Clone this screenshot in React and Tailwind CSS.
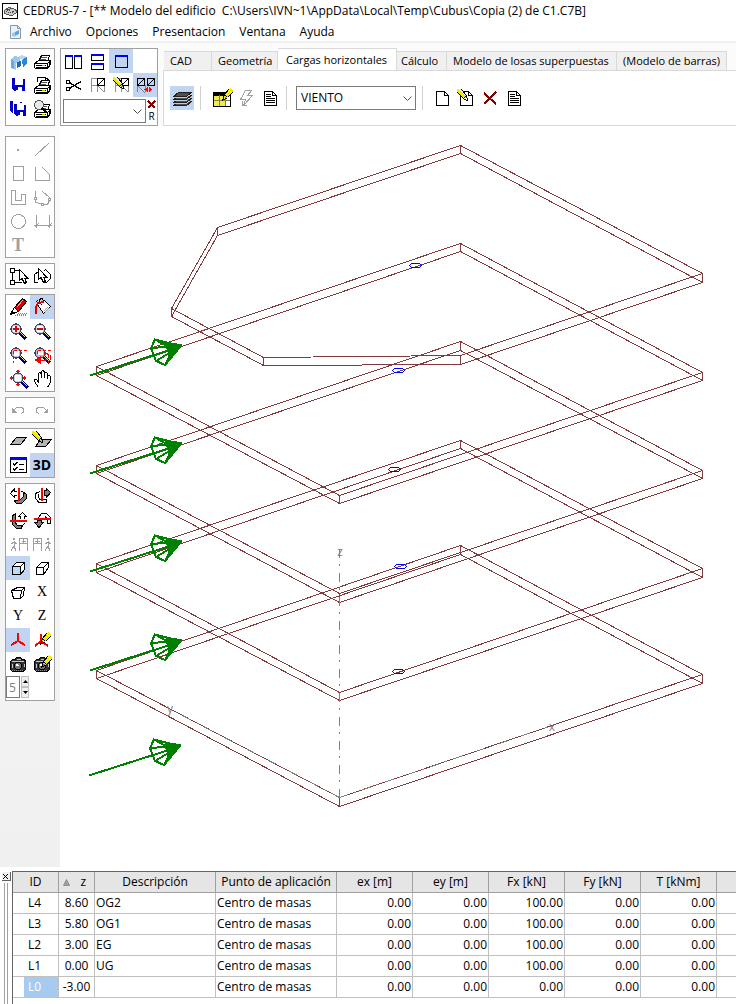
import { useState } from "react";

const BLUE = "#0000c8";
const GRAY = "#a0a0a0";

function Ico({ children, className = "size-6" }) {
  return (
    <svg viewBox="0 0 24 24" className={className} fill="none" stroke="#000" strokeWidth="1" shapeRendering="crispEdges" aria-hidden="true">
      {children}
    </svg>
  );
}

/* ---------- shared pieces of the icons ---------- */

function Pencil({ x = 0, y = 0 }) {
  return (
    <g transform={`translate(${x} ${y})`}>
      <path d="M0 0L4 0L9 6L9 9L6 8L0 3Z" fill="#f5e800" stroke="none" />
      <path d="M0.5 3.5L6.5 9.5M4.5 0.5L9.5 6.5L10.5 11.5L6 9.5M6.5 9.5L9.5 6.5" />
      <path d="M2 0L8 6" stroke="#fff" />
    </g>
  );
}

function PencilRight({ x = 0, y = 0 }) {
  return (
    <g transform={`translate(${x} ${y})`}>
      <path d="M9 0L12 3L6 10L3 9L3 7Z" fill="#f5e800" stroke="none" />
      <path d="M7.5 1.5L3.5 6.5L1.5 12.5L6.5 9.5L11.5 4.5M3.5 6.5L6.5 9.5" />
      <path d="M8 2L11 5" stroke="#fff" />
    </g>
  );
}

function Lens({ cx = 10, cy = 10, fill = "#fff" }) {
  return (
    <g>
      <path d={`M${cx + 4} ${cy + 4}l6 6`} stroke="#00007f" strokeWidth="3" />
      <path d={`M${cx + 4.5} ${cy + 3.5}l5 5`} stroke="#e0e080" />
      <circle cx={cx} cy={cy} r="5" fill={fill} stroke="#404060" strokeWidth="1.4" />
      <circle cx={cx} cy={cy} r="4" stroke="#c4c4dc" strokeWidth="0.8" />
    </g>
  );
}

function Printer({ y = 0 }) {
  return (
    <g transform={`translate(0 ${y})`}>
      <path d="M8.5 11.5L11.5 5.5L19.5 5.5L17.5 11.5Z" fill="#fff" />
      <path d="M11 7.5H17M10 9.5H16" stroke="#555" />
      <path d="M4.5 13.5L8.5 10.5H20.5V14.5L17.5 18.5H5.5L4.5 17.5Z" fill="#fff" />
      <path d="M4.5 13.5H17.5L20.5 10.5M17.5 13.5V18.5M6 15.5H16M6 17H17M19.5 12V16" />
      <path d="M12 15.5H15" stroke="#c8c800" />
    </g>
  );
}

function Floppy({ x = 6, y = 5, s = 13 }) {
  return (
    <g transform={`translate(${x} ${y})`}>
      <path d={`M0 0H2L${s} 1V${s}H2L0 ${s - 2}Z`} fill={BLUE} stroke="none" />
      <rect x="3" y="0" width={s - 5} height={s - 6} fill="#fff" stroke="none" />
      <rect x="4" y={s - 4} width={s - 7} height="4" fill="#fff" stroke="none" />
      <rect x="4" y={s - 4} width="2" height="3" fill={BLUE} stroke="none" />
    </g>
  );
}

function Sheet({ lines }) {
  return (
    <g>
      <path d="M6.5 5.5H14.5L18.5 9.5V19.5H6.5Z" fill="#fff" />
      <path d="M14.5 5.5V9.5H18.5" />
      {lines && <path d="M8 8.5H13M8 10.5H13M8 12.5H17M8 14.5H17M8 16.5H17" />}
    </g>
  );
}

function MiniGrid() {
  return (
    <g>
      <path d="M6.5 19V5.5H12.5V19M6 12.5H20M19.5 12V19M13 13L19 19" stroke="#909090" />
      <rect x="12.5" y="5.5" width="7" height="7" fill="#fff" />
      <path d="M12.5 12.5L19.5 5.5" />
    </g>
  );
}

function Cursor({ x, y }) {
  return <path transform={`translate(${x} ${y})`} d="M0.5 0.5V11.5L3 9.5L5.5 14.5L7.5 13.5L5.5 9H8.5Z" fill="#fff" />;
}

function Camera() {
  return (
    <g>
      <path d="M4.5 9.5L6.5 7.5H9L10.5 5.5H14.5L16 7.5H18.5L19.5 9.5V17.5L17 19.5H7L4.5 17.5Z" fill="#333" />
      <path d="M6 9.5H18M11 7.5H15M6 12V16M18 12V15" stroke="#c8c8c8" />
      <circle cx="12" cy="14" r="3.4" fill="#777" stroke="#000" />
      <path d="M10.5 13.5L12.5 12.5" stroke="#fff" strokeWidth="2" />
      <path d="M6 18.5H18" stroke="#888" strokeDasharray="1 1" />
    </g>
  );
}

function Letter({ children }) {
  return <span className="font-['Liberation_Serif'] text-[14px] leading-6">{children}</span>;
}

/* ---------- icons ---------- */

const icons = {
  open: (
    <Ico>
      <g stroke="none">
        <path d="M5 10L8 7L14 8V12L10 14V21L5 19Z" fill="#9cc8ea" />
        <path d="M5 10L8 12V20L5 19Z" fill="#6fa8d8" />
        <path d="M12 8L16 6L21 8L17 11Z" fill="#b4d8f4" />
        <path d="M16 11L21 8V15L17 18Z" fill="#2f86d2" />
        <path d="M11 13L15 12V17L11 19Z" fill="#1668c0" />
      </g>
    </Ico>
  ),
  print: <Ico><Printer y={1} /></Ico>,
  save: <Ico><Floppy /></Ico>,
  printPage: (
    <Ico>
      <path d="M7.5 9V4.5H15.5L19.5 7.5V10" fill="#fff" />
      <path d="M15.5 4.5V7.5H19.5" />
      <Printer y={2} />
    </Ico>
  ),
  saveAll: (
    <Ico>
      <Floppy x={4} y={4} s={12} />
      <path d="M7 6H21V21H9L7 19Z" fill="#fff" stroke="none" />
      <Floppy x={8} y={7} s={12} />
    </Ico>
  ),
  printZoom: (
    <Ico>
      <Printer y={2} />
      <circle cx="9" cy="8" r="4.5" fill="#e8e8e8" stroke="#555" />
      <path d="M12 11L17 16" stroke="#000" strokeWidth="2" />
    </Ico>
  ),
  splitV: (
    <Ico>
      <rect x="4.5" y="6.5" width="7" height="13" fill="#fff" />
      <rect x="13.5" y="6.5" width="7" height="13" fill="#fff" />
      <path d="M4 7H12M13 7H21" stroke="#0000ff" strokeWidth="2" />
    </Ico>
  ),
  splitH: (
    <Ico>
      <rect x="6.5" y="5.5" width="12" height="6" fill="#fff" />
      <rect x="6.5" y="14.5" width="12" height="6" fill="#fff" />
      <path d="M6 6H19M6 15H19" stroke="#0000ff" strokeWidth="2" />
    </Ico>
  ),
  single: (
    <Ico>
      <rect x="6.5" y="6.5" width="12" height="12" />
      <path d="M6 7H19" stroke="#0000ff" strokeWidth="2" />
    </Ico>
  ),
  cut: (
    <Ico>
      <path d="M9 10L20 16.5M9 15L20 8.5" strokeWidth="1.4" />
      <circle cx="7" cy="9" r="2" />
      <circle cx="7" cy="16" r="2" />
    </Ico>
  ),
  grid: <Ico><MiniGrid /></Ico>,
  gridEdit: <Ico><MiniGrid /><Pencil x={4} y={4} /></Ico>,
  gridPair: (
    <Ico>
      <path d="M4.5 19V12M12.5 12V19M5 13L12 20" stroke="#808080" />
      <rect x="4.5" y="5.5" width="7" height="7" />
      <rect x="14.5" y="5.5" width="7" height="7" />
      <path d="M4.5 12.5L11.5 5.5M14.5 12.5L21.5 5.5" />
      <path d="M11.5 16.5L15 13.5V19.5ZM19.5 16.5L16 13.5V19.5Z" fill="#f00" stroke="none" />
    </Ico>
  ),
  layers: (
    <Ico>
      {[9, 6, 3, 0].map((dy) => (
        <path key={dy} d={`M3.5 ${dy + 10.5}L8.5 ${dy + 6.5}H21.5L16.5 ${dy + 10.5}Z`} fill="#505050" stroke="#202020" />
      ))}
      <path d="M4 17.5H16L22 13.5M4 14.5H16L22 10.5M4 11.5H16L22 7.5" stroke="#c0cce0" />
    </Ico>
  ),
  tableEdit: (
    <Ico>
      <rect x="3.5" y="6.5" width="17" height="14" fill="#fff" />
      <path d="M4 9H15V20H4Z" fill="#f3ea4c" stroke="none" />
      <path d="M3 8H17" strokeWidth="3" />
      <path d="M4 14.5H20M9.5 9V20M15.5 9V20" stroke="#808040" />
      <path d="M3.5 6.5V20.5H20.5V9" />
      <PencilRight x={11} y={2} />
    </Ico>
  ),
  bolt: (
    <Ico>
      <path d="M11.5 4.5H17.5L13.5 9.5H18.5L9.5 19.5L11.5 13.5H6.5Z" fill="#fff" stroke={GRAY} />
      <path d="M8.5 19.5V14.5M8.5 19.5H13" stroke={GRAY} />
    </Ico>
  ),
  sheetLines: <Ico><Sheet lines /></Ico>,
  sheet: <Ico><Sheet /></Ico>,
  sheetEdit: <Ico><Sheet /><Pencil x={3} y={3} /></Ico>,
  remove: (
    <Ico>
      <path d="M6 7L18 18M18 6L6 18" stroke="#800000" strokeWidth="2" />
    </Ico>
  ),
  dot: <Ico><rect x="11" y="12" width="2" height="2" fill={GRAY} stroke="none" /></Ico>,
  line: <Ico><path d="M5.5 18.5L19.5 5.5" stroke={GRAY} /></Ico>,
  rect: <Ico><rect x="7.5" y="5.5" width="10" height="14" stroke={GRAY} /></Ico>,
  polygon: <Ico><path d="M5.5 6V19.5H19.5V13.5L12.5 6.5" stroke={GRAY} /></Ico>,
  wall: <Ico><path d="M5.5 5.5H9.5V15.5H15.5V9.5H19.5V19.5H5.5Z" stroke={GRAY} /></Ico>,
  polyNodes: (
    <Ico>
      <g stroke={GRAY}>
        <path d="M5.5 6V17L12.5 19.5H17.5L19.5 15.5V12.5L12.5 6.5" />
        <rect x="4.5" y="12.5" width="2" height="2" fill="#fff" />
        <rect x="11.5" y="18.5" width="2" height="2" fill="#fff" />
        <rect x="18.5" y="13.5" width="2" height="2" fill="#fff" />
      </g>
    </Ico>
  ),
  circle: <Ico><circle cx="12.5" cy="12.5" r="7" stroke={GRAY} /></Ico>,
  dimension: <Ico><path d="M6.5 6V19M19.5 6V19M4 16.5H22M4.5 18.5L8.5 14.5M17.5 18.5L21.5 14.5" stroke={GRAY} /></Ico>,
  text: <span className="font-['Liberation_Serif'] text-[18px] leading-6 font-bold text-[#a0a0a0]">T</span>,
  pickNodes: (
    <Ico>
      <rect x="4.5" y="4.5" width="4" height="4" />
      <rect x="4.5" y="16.5" width="4" height="4" />
      <path d="M6.5 9V16M9 6.5H13M9 18.5H16" />
      <Cursor x={13} y={5} />
    </Ico>
  ),
  pickShape: (
    <Ico>
      <path d="M8.5 7.5L4.5 10.5V18.5H8M14 18.5H16.5L20.5 14.5V10.5L15.5 5.5L13.5 7.5" />
      <Cursor x={8} y={4} />
    </Ico>
  ),
  marker: (
    <Ico>
      <path d="M11 19.5H21M9 20.5H20M12 18.5H22" stroke="#808080" strokeDasharray="1 1" />
      <path d="M8.5 12.5L16.5 3.5L20.5 6.5L12.5 16.5Z" fill="#e00000" />
      <path d="M11 12L17 5" stroke="#ff9090" />
      <path d="M8.5 12.5L4.5 19.5L12.5 16.5Z" fill="#fff" />
      <path d="M4.5 19.5L6 16L8 18Z" fill="#000" />
    </Ico>
  ),
  bucket: (
    <Ico>
      <path d="M7.5 9.5L14.5 5.5L20.5 11.5L13.5 18.5Z" fill="#fff" />
      <path d="M5.5 7.5L7.5 5.5M13.5 6.5L12.5 3.5H10.5L9.5 5.5L11.5 10.5" />
      <path d="M14 16L18 12M15 17L19 13" stroke="#a0a0a0" />
      <path d="M14 7L8 8L6 12V19" stroke="#e00000" strokeWidth="2" />
    </Ico>
  ),
  zoomIn: <Ico><Lens /><path d="M7 10H13M10 7V13" stroke="#e00000" strokeWidth="2" /></Ico>,
  zoomOut: <Ico><Lens /><path d="M7 10H13" stroke="#e00000" strokeWidth="2" /></Ico>,
  zoomWindow: (
    <Ico>
      <Lens fill="#b8b8b8" />
      <rect x="8" y="8" width="5" height="5" fill="#fff" stroke="none" />
      <path d="M7.5 8V20M8 7.5H21" stroke="#f00" strokeDasharray="3 2" />
    </Ico>
  ),
  zoomBack: (
    <Ico>
      <Lens fill="#b8b8b8" />
      <rect x="8" y="8" width="5" height="4" fill="#fff" stroke="none" />
      <path d="M7.5 8V12M8 7.5H21" stroke="#f00" strokeDasharray="3 2" />
      <path d="M11 17.5H15L18.5 14.5V11.5L16.5 10.5L14 12.5M18 19.5L20.5 16V12" stroke="#f00" />
      <path d="M4 17L11 13V21Z" fill="#f00" stroke="none" />
    </Ico>
  ),
  zoomAll: (
    <Ico>
      <Lens cx={12} cy={11} />
      <path d="M3 11L6 8.5V13.5ZM21 11L18 8.5V13.5ZM12 2L9.5 5H14.5ZM12 20L9.5 17H14.5Z" fill="#f00" stroke="none" />
    </Ico>
  ),
  hand: (
    <Ico>
      <path d="M8.5 20.5L4.5 14.5V12.5L6.5 12.5L8.5 15V6.5L9.5 5.5L11.5 6.5V11V4.5L12.5 3.5L14.5 4.5V11V5.5L16.5 5.5L17.5 7V12V8.5L19.5 8.5L20.5 10V15L17.5 20.5" fill="#fff" />
    </Ico>
  ),
  undo: <Ico><path d="M8 11.5L11 9.5H16L17.5 11V14L15 15.5" stroke={GRAY} /><path d="M6 10V15H11Z" fill={GRAY} stroke="none" /></Ico>,
  redo: <Ico><path d="M16 11.5L13 9.5H8L6.5 11V14L9 15.5" stroke={GRAY} /><path d="M18 10V15H13Z" fill={GRAY} stroke="none" /></Ico>,
  plane: (
    <Ico>
      <path d="M4.5 15.5L10.5 8.5H20.5L14.5 15.5Z" fill="#b4b4b4" />
    </Ico>
  ),
  planeEdit: (
    <Ico>
      <path d="M5.5 17.5L10.5 10.5H21.5L15.5 17.5Z" fill="#b4b4b4" />
      <Pencil x={2} y={2} />
    </Ico>
  ),
  checks: (
    <Ico>
      <rect x="4.5" y="4.5" width="16" height="15" fill="#fff" />
      <path d="M4 5.5H21" stroke="#0000ff" strokeWidth="3" />
      <path d="M7 10.5L8.5 12L11.5 9M7 15.5L8.5 17L11.5 14" strokeWidth="1.4" />
      <path d="M13 11.5H18M13 16.5H18" />
    </Ico>
  ),
  threeD: <span className="font-['Open_Sans'] text-[14px] leading-6 font-bold">3D</span>,
  turnLeft: (
    <Ico>
      <path d="M11 7.5H8.5V4.5L4.5 9.5L8.5 13.5V11.5H11M15 7.5H17" />
      <path d="M17 8L20 10V15L16 19H10L8 16H14L17 13Z" fill="#808080" />
      <path d="M13 4V17" stroke="#f00" strokeWidth="2" />
    </Ico>
  ),
  turnRight: (
    <Ico>
      <path d="M20.5 8.5L16.5 4.5V6.5H14V11.5H16.5V13.5Z" fill="#808080" />
      <path d="M10 7.5L5.5 9.5V14.5L9 18.5H16.5V15.5H10L8.5 13V10" fill="#fff" />
      <path d="M12 4V17" stroke="#f00" strokeWidth="2" />
    </Ico>
  ),
  turnUp: (
    <Ico>
      <path d="M14.5 11V8.5H12.5L16.5 4.5L20.5 8.5H18.5V11M18.5 15L15.5 19.5H11" />
      <path d="M9 6L6 8V16L10 20H15V17H11L9 14Z" fill="#808080" />
      <path d="M4 13H21" stroke="#f00" strokeWidth="2" />
    </Ico>
  ),
  turnDown: (
    <Ico>
      <path d="M8.5 11V9.5L11.5 5.5H16.5L20.5 9.5V15.5H17.5V11L15 8.5" fill="#fff" />
      <path d="M4.5 14.5H7V12H11V14.5H13.5L9 19.5Z" fill="#808080" />
      <path d="M4 11H21" stroke="#f00" strokeWidth="2" />
    </Ico>
  ),
  walkIn: (
    <Ico>
      <g stroke={GRAY}>
        <rect x="7.5" y="6.5" width="1" height="1" />
        <path d="M8 9V14L5 19M8 14L10 19M5 12L8 10L11 12" />
        <path d="M13.5 19V6.5H21.5V19M13 11.5H22M15.5 9H20M17.5 7V11" />
      </g>
    </Ico>
  ),
  walkOut: (
    <Ico>
      <g stroke={GRAY}>
        <rect x="17.5" y="6.5" width="1" height="1" />
        <path d="M18 9V14L15 19M18 14L20 19M15 12L18 10L21 12" />
        <path d="M3.5 19V6.5H11.5V19M3 11.5H12M5 9H10M7.5 7V11" />
      </g>
    </Ico>
  ),
  cube: (
    <Ico>
      <path d="M6.5 10.5H14.5V18.5H6.5Z" fill="#b8dcf4" />
      <path d="M6.5 10.5L10.5 6.5H18.5V13.5L14.5 18.5V10.5Z" fill="#fff" />
      <path d="M14.5 10.5L18.5 6.5" />
    </Ico>
  ),
  cubeOpen: (
    <Ico>
      <path d="M6.5 11.5H13.5V18.5H6.5ZM6.5 11.5L11.5 6.5H18.5V11.5L13.5 18.5M13.5 11.5L18.5 6.5" fill="#fff" />
    </Ico>
  ),
  perspective: <Ico><path d="M5.5 10.5L11.5 7.5H18.5L17.5 15.5L14.5 18.5H7.5ZM5.5 10.5H15.5L14.5 18.5M15.5 10.5L18.5 7.5" /></Ico>,
  axisX: <Letter>X</Letter>,
  axisY: <Letter>Y</Letter>,
  axisZ: <Letter>Z</Letter>,
  axes: <Ico><path d="M12 5V13L5 17M12 13L19 17" stroke="#f00" strokeWidth="2" /></Ico>,
  axesEdit: (
    <Ico>
      <path d="M11 6V13L5 18M11 13L18 18" stroke="#f00" strokeWidth="2" />
      <PencilRight x={9} y={4} />
    </Ico>
  ),
  camera: <Ico><Camera /></Ico>,
  cameraEdit: <Ico><Camera /><PencilRight x={10} y={3} /></Ico>,
};

const fileTools = ["open", "print", "save", "printPage", "saveAll", "printZoom"];
const windowTools = ["splitV", "splitH", "single", null, "cut", "grid", "gridEdit", "gridPair"];

const sidePanels = [
  ["dot", "line", "rect", "polygon", "wall", "polyNodes", "circle", "dimension", "text"],
  ["pickNodes", "pickShape"],
  ["marker", "bucket", "zoomIn", "zoomOut", "zoomWindow", "zoomBack", "zoomAll", "hand"],
  ["undo", "redo"],
  ["plane", "planeEdit", "checks", "threeD"],
];

const viewTools = [
  "turnLeft", "turnRight", "turnUp", "turnDown", "walkIn", "walkOut", "cube", "cubeOpen",
  "perspective", "axisX", "axisY", "axisZ", "axes", "axesEdit", "camera", "cameraEdit",
];

const pressed = ["single", "gridPair", "layers", "bucket", "threeD", "cube", "axes"];

const menus = ["Archivo", "Opciones", "Presentacion", "Ventana", "Ayuda"];

const tabs = [
  { name: "CAD", size: "min-w-[48px] pl-[6px]" },
  { name: "Geometría", size: "min-w-[66px] pl-[6px]" },
  { name: "Cargas horizontales", size: "min-w-[119px] pl-2" },
  { name: "Cálculo", size: "min-w-[50px] pl-1" },
  { name: "Modelo de losas superpuestas", size: "min-w-[170px] pl-[6px]" },
  { name: "(Modelo de barras)", size: "min-w-[110px] pl-[6px]" },
];

const loads = [
  { id: "L4", z: "8.60", desc: "OG2", fx: "100.00" },
  { id: "L3", z: "5.80", desc: "OG1", fx: "100.00" },
  { id: "L2", z: "3.00", desc: "EG", fx: "100.00" },
  { id: "L1", z: "0.00", desc: "UG", fx: "100.00" },
  { id: "L0", z: "-3.00", desc: "", fx: "0.00" },
];

/* each corner is [x, upper y, lower y] */
const slabs = [
  [[460, 145, 153], [702, 273, 282], [460, 355, 364], [263, 357, 365], [171, 308, 316], [217, 227, 235]],
  [[460, 243, 251], [702, 372, 380], [339, 495, 503], [96, 366, 375]],
  [[460, 341, 350], [702, 470, 478], [339, 593, 602], [96, 465, 473]],
  [[460, 440, 448], [702, 568, 577], [339, 692, 700], [96, 563, 572]],
  [[460, 545, 554], [702, 674, 683], [339, 797, 806], [96, 670, 678]],
];

const centers = [[415, 265], [398, 370], [394, 469], [400, 566], [398, 671]];
const arrows = [[0, 0], [0, 98], [0, 196], [0, 295], [-1, 400]];

function ToolButton({ name }) {
  return (
    <button
      type="button"
      aria-label={name}
      className={`flex size-6 items-center justify-center ${pressed.includes(name) ? "bg-[#c1d5f2]" : ""}`}
    >
      {icons[name]}
    </button>
  );
}

function Panel({ children, className = "" }) {
  return <div className={`border border-[#a0a0a0] bg-white ${className}`}>{children}</div>;
}

function Separator() {
  return <div className="h-6 w-px bg-[#d0d0d0]"></div>;
}

function DropDown({ label, options, className }) {
  return (
    <div className={`relative ${className}`}>
      <select aria-label={label} className="h-6 w-full appearance-none border border-[#7a7a7a] bg-white pl-1 text-[12px] leading-4 outline-none">
        {options.map((option) => (
          <option key={option}>{option}</option>
        ))}
      </select>
      <svg viewBox="0 0 9 6" className="pointer-events-none absolute top-[10px] right-1 h-[6px] w-[9px]" fill="none" stroke="#505050">
        <path d="M0.5 0.5L4.5 4.5L8.5 0.5" />
      </svg>
    </div>
  );
}

function WindArrow({ dx, dy }) {
  return (
    <g transform={`translate(${dx} ${dy})`} stroke="#008000" strokeWidth="2" fill="none">
      <path d="M90 375.5L176 348" />
      <path d="M155 339.5L151 348L156 361L165 365L170 356L167 346Z" />
      <path d="M155 339.5L181 346L151 348M181 346L156 361M181 346L165 365M181 346L170 356" />
      <path d="M182 345L166 342V347L169 352L168 360Z" fill="#008000" strokeWidth="1" />
    </g>
  );
}

function BuildingModel() {
  return (
    <svg viewBox="60 126 676 741" className="block w-full" role="img" aria-label="Modelo del edificio" fill="none" shapeRendering="crispEdges">
      <g stroke="#803c3c" strokeLinejoin="bevel" transform="translate(0.5 0.5)">
        {slabs.map((slab, i) => (
          <g key={i}>
            <polygon points={slab.map(([x, top]) => `${x},${top}`).join(" ")} />
            <polygon points={slab.map(([x, , bottom]) => `${x},${bottom}`).join(" ")} />
            {slab.map(([x, top, bottom]) => (
              <line key={`${x}-${top}`} x1={x} x2={x} y1={top} y2={bottom} />
            ))}
          </g>
        ))}
      </g>
      <g stroke="#808080" strokeDasharray="9 6 2 7">
        <path d="M339.5 549V797" />
        <path d="M339.5 797.5L548 727" />
        <path d="M339.5 797.5L172 710" />
      </g>
      <g stroke="#0000ff">
        {centers.map(([x, y]) => (
          <path key={y} transform={`translate(${x} ${y})`} d="M-5.5 0.5L-3.5 -1.5H4.5L6.5 0.5L4.5 2.5H-3.5Z" />
        ))}
      </g>
      {arrows.map(([dx, dy]) => (
        <WindArrow key={dy} dx={dx} dy={dy} />
      ))}
      <g className="font-['Open_Sans'] text-[12px]" fill="#808080" textAnchor="middle">
        <text x="340" y="556">z</text>
        <text x="170" y="713">y</text>
        <text x="552" y="731">x</text>
      </g>
    </svg>
  );
}

function LoadsTable() {
  const head = "border-r border-b border-[#a0a0a0] text-center font-normal";
  const cell = "border-r border-b border-[#c0c0c0]";
  return (
    <table className="w-full table-fixed border-separate border-spacing-0 text-[12px] leading-5 whitespace-nowrap">
      <colgroup>
        <col className="w-[46px]" />
        <col className="w-[36px]" />
        <col className="w-[121px]" />
        <col className="w-[121px]" />
        <col className="w-[76px]" />
        <col className="w-[76px]" />
        <col className="w-[76px]" />
        <col className="w-[76px]" />
        <col className="w-[76px]" />
        <col />
      </colgroup>
      <thead className="bg-[#e5e5e5]">
        <tr>
          <th className={head}>ID</th>
          <th className={head}>
            <div className="flex items-center justify-between pr-2 pl-1">
              <svg viewBox="0 0 7 7" className="size-[7px]" fill="#a0a0a0" stroke="#909090">
                <path d="M3.5 0.5L6.5 6.5H0.5Z" />
              </svg>
              z
            </div>
          </th>
          <th className={head}>Descripción</th>
          <th className={head}>Punto de aplicación</th>
          <th className={head}>ex [m]</th>
          <th className={head}>ey [m]</th>
          <th className={head}>Fx [kN]</th>
          <th className={head}>Fy [kN]</th>
          <th className={head}>T [kNm]</th>
          <th className="border-b border-[#a0a0a0]"></th>
        </tr>
      </thead>
      <tbody>
        {loads.map((load) => (
          <tr key={load.id}>
            <td className={`${cell} pl-[11px]`}>
              <div className={load.id === "L0" ? "bg-[#a6caf0] pl-1 text-white" : "pl-1"}>{load.id}</div>
            </td>
            <td className={`${cell} text-center`}>{load.z}</td>
            <td className={`${cell} pl-px`}>{load.desc}</td>
            <td className={`${cell} pl-px`}>Centro de masas</td>
            <td className={`${cell} pr-px text-right`}>0.00</td>
            <td className={`${cell} pr-px text-right`}>0.00</td>
            <td className={`${cell} pr-px text-right`}>{load.fx}</td>
            <td className={`${cell} pr-px text-right`}>0.00</td>
            <td className={`${cell} pr-px text-right`}>0.00</td>
            <td className="border-b border-[#c0c0c0]"></td>
          </tr>
        ))}
      </tbody>
    </table>
  );
}

export default function App() {
  const [activeTab, setActiveTab] = useState("Cargas horizontales");

  return (
    <div className="flex min-h-screen flex-col bg-white font-['Open_Sans',sans-serif] text-[12px] leading-4 text-black">
      <header className="flex h-[22px] items-center gap-[5px] pl-[2px]">
        <svg viewBox="0 0 16 16" className="size-4" fill="none" stroke="#000" shapeRendering="crispEdges">
          <rect x="0.5" y="0.5" width="15" height="15" fill="#fff" />
          <path d="M2 8L7 4L14 7V10L9 13L2 10Z" fill="#ccc" stroke="#555" />
          <path d="M2 8L9 10L14 7M5 6L11 9M9 5L5 8" stroke="#444" strokeDasharray="1 1" />
        </svg>
        <h1 className="whitespace-pre">{"CEDRUS-7 - [** Modelo del edificio  C:\\Users\\IVN~1\\AppData\\Local\\Temp\\Cubus\\Copia (2) de C1.C7B]"}</h1>
      </header>

      <nav className="flex h-[21px] items-center border-b-2 border-[#f0f0f0] pl-[9px]">
        <svg viewBox="0 0 13 14" className="mr-2 h-[14px] w-[13px]" fill="none">
          <path d="M1.5 0.5H8.5L11.5 3.5V13.5H1.5Z" fill="#e8f2fa" stroke="#8a98a8" />
          <path d="M8.5 0.5V3.5H11.5" stroke="#8a98a8" />
          <path d="M3 8L6 7V12L3 11Z" fill="#9ccbec" />
          <path d="M6 7L10 5V9L6 11Z" fill="#5aa6dc" />
        </svg>
        <div className="flex gap-[14px]">
          {menus.map((menu) => (
            <button key={menu} type="button">{menu}</button>
          ))}
        </div>
      </nav>

      <div className="flex gap-[5px] bg-[#fbfbfb] pt-[5px] pl-[5px]">
        <Panel className="grid shrink-0 grid-cols-[24px_24px] content-start pb-1">
          {fileTools.map((name) => (
            <ToolButton key={name} name={name} />
          ))}
        </Panel>

        <Panel className="shrink-0">
          <div className="grid grid-cols-[24px_24px_24px_24px]">
            {windowTools.map((name, i) => (name ? <ToolButton key={name} name={name} /> : <span key={i}></span>))}
          </div>
          <div className="flex items-center pt-[2px] pl-[2px]">
            <DropDown label="Vista" options={[""]} className="w-[83px]" />
            <div className="flex flex-col items-center pl-px">
              <button type="button" aria-label="Borrar">
                <svg viewBox="0 0 9 10" className="h-[10px] w-[9px]" stroke="#800000" strokeWidth="2" shapeRendering="crispEdges">
                  <path d="M1 1L8 8M8 1L1 8" />
                </svg>
              </button>
              <button type="button" className="text-[10px] leading-3">R</button>
            </div>
          </div>
        </Panel>

        <div className="flex min-w-0 flex-1 flex-col">
          <div role="tablist" className="flex h-[22px] items-end pl-px text-[11px]">
            {tabs.map((tab) => (
              <button
                key={tab.name}
                type="button"
                role="tab"
                aria-selected={tab.name === activeTab}
                onClick={() => setActiveTab(tab.name)}
                className={`${tab.size} border-t border-r border-[#d9d9d9] text-left whitespace-nowrap ${
                  tab.name === activeTab ? "h-[22px] bg-white" : "h-[19px] bg-[#f0f0f0]"
                }`}
              >
                {tab.name}
              </button>
            ))}
          </div>
          <div className="flex flex-1 items-center border-y border-l border-[#d9d9d9] bg-white pl-[6px]">
            <ToolButton name="layers" />
            <div className="flex items-center pl-[6px]">
              <Separator />
              <div className="flex pr-1 pl-[9px]">
                <ToolButton name="tableEdit" />
                <ToolButton name="bolt" />
                <ToolButton name="sheetLines" />
              </div>
              <Separator />
              <DropDown label="Caso de carga" options={["VIENTO"]} className="mr-[6px] ml-[9px] w-[120px]" />
              <Separator />
              <div className="flex pl-[7px]">
                <ToolButton name="sheet" />
                <ToolButton name="sheetEdit" />
                <ToolButton name="remove" />
                <ToolButton name="sheetLines" />
              </div>
            </div>
          </div>
        </div>
      </div>

      <main className="flex">
        <aside className="flex w-[60px] shrink-0 flex-col gap-[5px] bg-linear-to-b from-[#fbfbfb] to-[#f0f0f0] px-[5px] pt-[10px]">
          {sidePanels.map((panel) => (
            <Panel key={panel[0]} className="grid grid-cols-[24px_24px]">
              {panel.map((name) => (
                <ToolButton key={name} name={name} />
              ))}
            </Panel>
          ))}
          <Panel>
            <div className="grid grid-cols-[24px_24px]">
              {viewTools.map((name) => (
                <ToolButton key={name} name={name} />
              ))}
            </div>
            <div className="flex h-6 gap-px">
              <input aria-label="Paso" defaultValue="5" className="h-[22px] w-[14px] border border-[#7a7a7a] bg-white pl-[2px] text-[12px] text-[#808080] outline-none" />
              <div className="flex flex-col">
                <button type="button" aria-label="Más" className="flex h-[11px] w-2 items-center justify-center border border-[#c0c0c0] bg-[#f0f0f0]">
                  <svg viewBox="0 0 5 3" className="h-[3px] w-[5px] shrink-0"><path d="M0 3L2.5 0L5 3Z" /></svg>
                </button>
                <button type="button" aria-label="Menos" className="flex h-[11px] w-2 items-center justify-center border border-[#c0c0c0] bg-[#f0f0f0]">
                  <svg viewBox="0 0 5 3" className="h-[3px] w-[5px] shrink-0"><path d="M0 0L2.5 3L5 0Z" /></svg>
                </button>
              </div>
            </div>
          </Panel>
        </aside>
        <section className="min-w-0 flex-1 bg-white">
          <BuildingModel />
        </section>
      </main>

      <footer className="flex flex-1 pt-1">
        <div className="flex w-3 shrink-0 flex-col items-center gap-[2px] pt-px">
          <button type="button" aria-label="Cerrar" className="flex size-[9px] items-center justify-center border-r border-b border-[#606060] bg-[#f0f0f0]">
            <svg viewBox="0 0 5 5" className="size-[5px]" stroke="#000"><path d="M0 0L5 5M5 0L0 5" /></svg>
          </button>
          <div className="w-1 flex-1 border-x border-[#a0a0a0]"></div>
        </div>
        <div className="min-w-0 flex-1 overflow-hidden border-t border-l border-[#646464]">
          <LoadsTable />
        </div>
      </footer>
    </div>
  );
}
